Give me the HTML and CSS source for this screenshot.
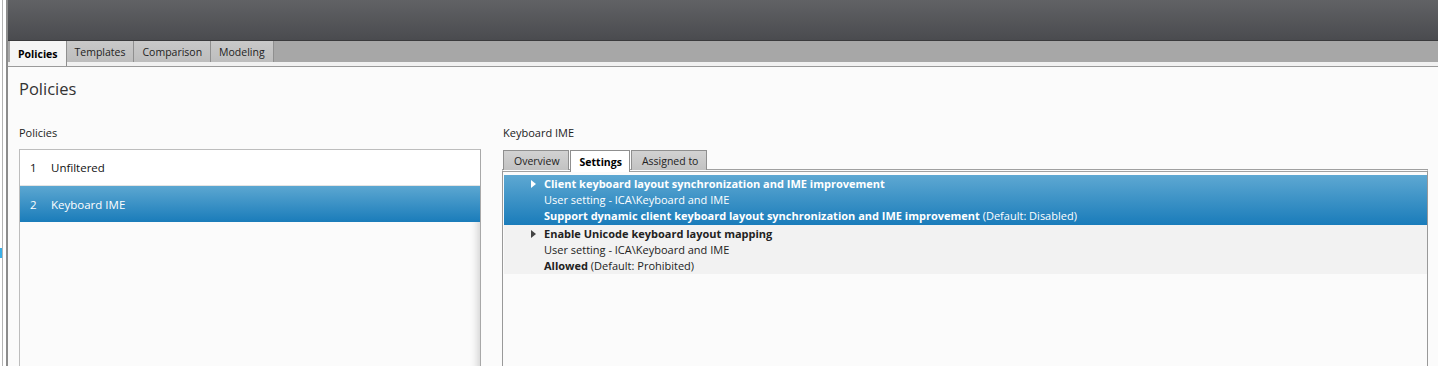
FILE: index.html
```html
<!DOCTYPE html>
<html lang="en">
<head>
    <meta charset="UTF-8">
    <title>Policies</title>
    <link rel="stylesheet" href="styles.css">
</head>
<body>
    <div class="frame">
        <div class="edge"><span class="edge-mark"></span></div>
        <div class="app">
            <div class="header"></div>
            <div class="tabbar">
                <a href="#" class="tab active">Policies</a>
                <a href="#" class="tab">Templates</a>
                <a href="#" class="tab">Comparison</a>
                <a href="#" class="tab">Modeling</a>
            </div>
            <div class="content">
                <h1 class="heading">Policies</h1>
                <div class="panes">
                    <div class="left-pane">
                        <div class="label">Policies</div>
                        <div class="policy-list">
                            <div class="policy-row"><span class="num">1</span>Unfiltered</div>
                            <div class="policy-row selected"><span class="num">2</span>Keyboard IME</div>
                        </div>
                    </div>
                    <div class="right-pane">
                        <div class="label">Keyboard IME</div>
                        <div class="subtabs">
                            <a href="#" class="subtab">Overview</a>
                            <a href="#" class="subtab active">Settings</a>
                            <a href="#" class="subtab">Assigned to</a>
                        </div>
                        <div class="settings-box">
                            <div class="setting selected">
                                <span class="arrow"></span>
                                <div class="setting-text">
                                    <div class="title">Client keyboard layout synchronization and IME improvement</div>
                                    <div>User setting - ICA\Keyboard and IME</div>
                                    <div><b>Support dynamic client keyboard layout synchronization and IME improvement</b> (Default: Disabled)</div>
                                </div>
                            </div>
                            <div class="setting alt">
                                <span class="arrow"></span>
                                <div class="setting-text">
                                    <div class="title">Enable Unicode keyboard layout mapping</div>
                                    <div>User setting - ICA\Keyboard and IME</div>
                                    <div><b>Allowed</b> (Default: Prohibited)</div>
                                </div>
                            </div>
                        </div>
                    </div>
                </div>
            </div>
        </div>
    </div>
</body>
</html>
```
FILE: styles.css
```css
body {
    margin: 0;
    font-family: "Open Sans", "Noto Sans", sans-serif;
    color: #1e1e1e;
    background: #fff;
    overflow: hidden;
}
.frame {
    display: flex;
    height: 366px;
    overflow: hidden;
}
.edge {
    width: 4px;
    border-left: 2px solid #fff;
    border-right: 2px solid #8c8c8c;
    position: relative;
    background: #fff;
}
.edge::before {
    content: "";
    display: block;
    width: 1px;
    height: 100%;
    background: #b4b4b4;
}
.edge-mark {
    position: absolute;
    left: -2px;
    top: 248px;
    width: 2px;
    height: 10px;
    background: #3ab0e8;
}
.app {
    flex: 1;
    display: flex;
    flex-direction: column;
    background: #fbfbfb;
}
.header {
    flex-shrink: 0;
    height: 40px;
    background: linear-gradient(#616265, #4a4b4f);
    border-bottom: 1px solid #3a3a3c;
}
.tabbar {
    flex-shrink: 0;
    display: flex;
    padding-left: 2px;
    height: 21px;
    background: #a7a7a7;
    border-bottom: 4px solid #f1f1f1;
    box-shadow: 0 1px 0 #9a9a9a;
    margin-bottom: 1px;
}
.tab {
    display: flex;
    align-items: center;
    padding: 0 8px;
    font-size: 10.5px;
    color: #222;
    text-decoration: none;
    background: linear-gradient(#c9c9c9, #bdbdbd);
    border-right: 1px solid #8f8f8f;
}
.tab.active {
    background: #f5f5f5;
    font-weight: bold;
    color: #000;
    height: 25px;
}
.content {
    flex-shrink: 0;
    padding: 0 10px 0 11px;
}
.heading {
    margin: 11px 0 25px;
    font-size: 16.5px;
    line-height: 22px;
    font-weight: normal;
    color: #333;
}
.panes {
    display: flex;
    gap: 21px;
}
.left-pane {
    width: 462px;
}
.right-pane {
    flex: 1;
}
.label {
    font-size: 11px;
    line-height: 16px;
    color: #222;
}
.left-pane .label {
    margin-bottom: 8px;
}
.right-pane .label {
    margin-left: 1px;
    margin-bottom: 9px;
}
.policy-list {
    height: 240px;
    background: #fbfbfb;
    border: 1px solid #bdbdbd;
    border-right-color: #a8a8a8;
    box-shadow: inset -10px 0 8px -8px rgba(0, 0, 0, 0.18);
}
.policy-row {
    display: flex;
    align-items: center;
    height: 35px;
    font-size: 11.5px;
    color: #111;
    border-bottom: 1px solid #e4e4e4;
    background: #fff;
}
.policy-row .num {
    width: 21px;
    padding-left: 10px;
}
.policy-row.selected {
    height: 36px;
    border-bottom: none;
    color: #fff;
    background: linear-gradient(#5ca7d1, #1a7cba);
}
.subtabs {
    display: flex;
    height: 20px;
    margin-left: 1px;
}
.subtab {
    display: flex;
    align-items: center;
    padding: 0 8px 0 10px;
    font-size: 10.5px;
    color: #222;
    text-decoration: none;
    background: linear-gradient(#d2d2d2, #c2c2c2);
    border: 1px solid #8f8f8f;
    border-bottom: none;
    margin-right: 1px;
}
.subtab.active {
    padding: 0 7px 0 9px;
    background: #fff;
    font-weight: bold;
    color: #000;
    height: 21px;
    position: relative;
    z-index: 1;
}
.settings-box {
    height: 220px;
    border: 1px solid #999;
    border-top: 3px double #a0a0a0;
    margin-top: -1px;
    padding: 3px 0 0 1px;
    background: #fbfbfb;
}
.setting {
    display: flex;
    height: 50px;
    padding-top: 1px;
    box-sizing: border-box;
    font-size: 11px;
    line-height: 16px;
    color: #222;
}
.setting.selected {
    color: #fff;
    background: linear-gradient(#5ea8d2, #1a7cba);
}
.setting.alt {
    height: 49px;
    background: #f2f2f2;
}
.arrow {
    width: 0;
    height: 0;
    margin: 4px 8px 0 27px;
    border-top: 4px solid transparent;
    border-bottom: 4px solid transparent;
    border-left: 5px solid #444;
}
.setting.selected .arrow {
    border-left-color: #fff;
}
.setting-text .title {
    font-weight: bold;
}
```
